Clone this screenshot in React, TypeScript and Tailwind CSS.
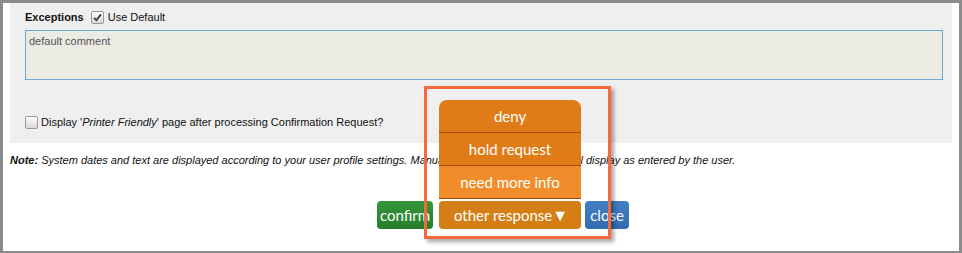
import React from "react";

function CheckBox({ checked }: { checked?: boolean }) {
  return (
    <span className="inline-flex h-[13px] w-[13px] items-center justify-center rounded-[2px] border border-[#9a9a9a] bg-gradient-to-b from-[#fdfdfd] to-[#d9d9d9]">
      {checked && (
        <svg width="9" height="9" viewBox="0 0 9 9">
          <path d="M1 4.8 L3.4 7.2 L8 1.4" fill="none" stroke="#3a3a3a" strokeWidth="1.8" />
        </svg>
      )}
    </span>
  );
}

function MenuItem({ label, light, top }: { label: string; light?: boolean; top?: boolean }) {
  return (
    <div
      className={`flex h-[33px] items-center justify-center border-b border-b-[#a24d08] text-[15px] text-white ${
        light ? "bg-[#f08d2a]" : "bg-[#df7c17]"
      } ${top ? "rounded-t-[8px]" : ""}`}
    >
      {label}
    </div>
  );
}

export default function App() {
  return (
    <div className="h-[253px] w-[962px] overflow-hidden border-[3px] border-b-[2px] border-[#8c8c8c] bg-white font-['Liberation_Sans',Arial,sans-serif] text-[11px] text-[#111]">
      <div className="ml-[7px] h-[140px] w-[942px] bg-[#efefef] pl-[15px] pt-[8px]">
        <div className="flex h-[13px] items-center">
          <span className="font-bold">Exceptions</span>
          <span className="ml-[7px] mr-[4px] flex">
            <CheckBox checked />
          </span>
          <span>Use Default</span>
        </div>
        <div className="mt-[6px] h-[50px] w-[918px] border border-[#6fa8d3] bg-[#ecebe3] px-[3px] pt-[2px] text-[#555]">
          default comment
        </div>
        <div className="mt-[35px] flex h-[14px] items-center">
          <span className="mr-[3px] flex">
            <CheckBox />
          </span>
          <span>
            Display '<i>Printer Friendly</i>' page after processing Confirmation Request?
          </span>
        </div>
      </div>
      <div className="ml-[7px] mt-[11px] h-[12px] whitespace-nowrap italic leading-[12px]">
        <b>Note:</b> System dates and text are displayed according to your user profile settings. Manual comment and
        response will display as entered by the user.
      </div>
      <div className="relative ml-[374px] mt-[35px] flex h-[28px] font-['Lato',sans-serif] text-[15px] text-white">
        <div className="flex w-[56px] items-center justify-center rounded-[4px] bg-gradient-to-b from-[#36963a] to-[#267d2a]">
          confirm
        </div>
        <div className="relative ml-[6px] w-[142px]">
          <div className="absolute bottom-[30px] left-0 w-[142px]">
            <MenuItem label="deny" top />
            <MenuItem label="hold request" />
            <MenuItem label="need more info" light />
          </div>
          <div className="flex h-full items-center justify-center rounded-[4px] bg-[#d57e16] pl-[2px]">
            other response
            <span className="text-[16px]">▼</span>
          </div>
        </div>
        <div className="ml-[4px] flex w-[44px] items-center justify-center rounded-[4px] bg-gradient-to-b from-[#447fc4] to-[#336bb0]">
          close
        </div>
        <div className="pointer-events-none absolute left-[47px] top-[-115px] h-[153px] w-[187px] border-[3px] border-[#f66a3b] shadow-[3px_3px_4px_rgba(0,0,0,0.35)]" />
      </div>
    </div>
  );
}
